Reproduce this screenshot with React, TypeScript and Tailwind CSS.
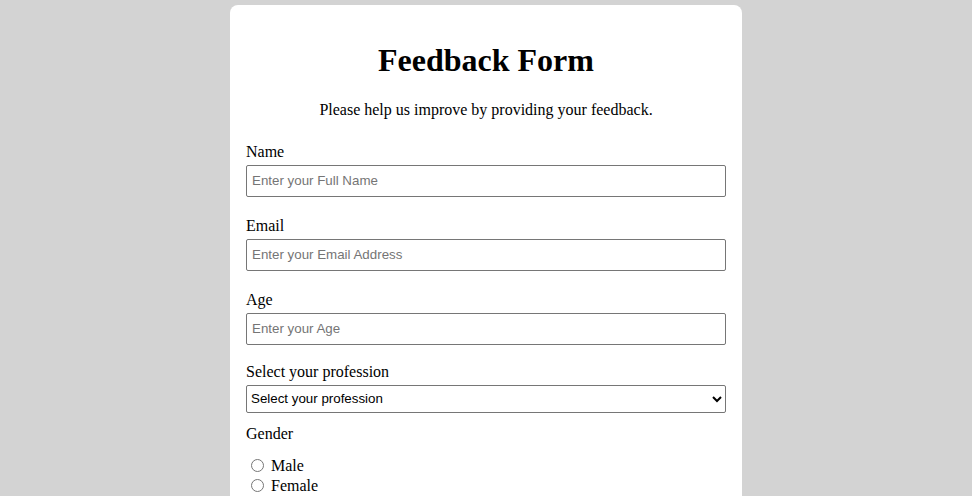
import { useState } from 'react';

const inputCls =
  "block w-full h-[32px] border border-[#767676] rounded-[2px] px-[5px] pb-[2px] font-['Liberation_Sans',Arial,sans-serif] text-[13.33px] text-black placeholder:text-[#757575] outline-none";

const labelCls = 'block text-base leading-[18px]';

export default function App() {
  const [gender, setGender] = useState('');

  return (
    <div className="min-h-screen bg-[#d3d3d3] pt-[5px] font-['Liberation_Serif','Times_New_Roman',serif] text-black">
      <div className="mx-auto w-[512px] min-h-[600px] rounded-lg bg-white px-4 pt-[37px]">
        <h1 className="text-center text-[32px] leading-[37px] font-bold">Feedback Form</h1>
        <p className="mt-[22px] text-center text-base leading-[18px]">
          Please help us improve by providing your feedback.
        </p>

        <form className="mt-[24px]">
          <label className={`${labelCls} mb-[4px]`}>Name</label>
          <input type="text" placeholder="Enter your Full Name" className={inputCls} />

          <label className={`${labelCls} mt-[20px] mb-[4px]`}>Email</label>
          <input type="email" placeholder="Enter your Email Address" className={inputCls} />

          <label className={`${labelCls} mt-[20px] mb-[4px]`}>Age</label>
          <input type="number" placeholder="Enter your Age" className={inputCls} />

          <label className={`${labelCls} mt-[18px] mb-[4px]`}>Select your profession</label>
          <select
            defaultValue=""
            className="block w-full h-[28px] border border-[#767676] rounded-[2px] pb-[1px] font-['Liberation_Sans',Arial,sans-serif] text-[13.33px] text-black bg-white"
          >
            <option value="">Select your profession</option>
            <option value="student">Student</option>
            <option value="engineer">Engineer</option>
            <option value="teacher">Teacher</option>
            <option value="other">Other</option>
          </select>

          <label className={`${labelCls} mt-[12px]`}>Gender</label>
          <div className="mt-[12px] flex flex-col">
            {['Male', 'Female'].map((g) => (
              <label key={g} className="flex items-center h-[20px] text-base">
                <input
                  type="radio"
                  name="gender"
                  value={g}
                  checked={gender === g}
                  onChange={() => setGender(g)}
                  className="ml-[5px] mr-[7px] w-[13px] h-[13px]"
                />
                <span className="pt-[2px] leading-[18px]">{g}</span>
              </label>
            ))}
          </div>
        </form>
      </div>
    </div>
  );
}
